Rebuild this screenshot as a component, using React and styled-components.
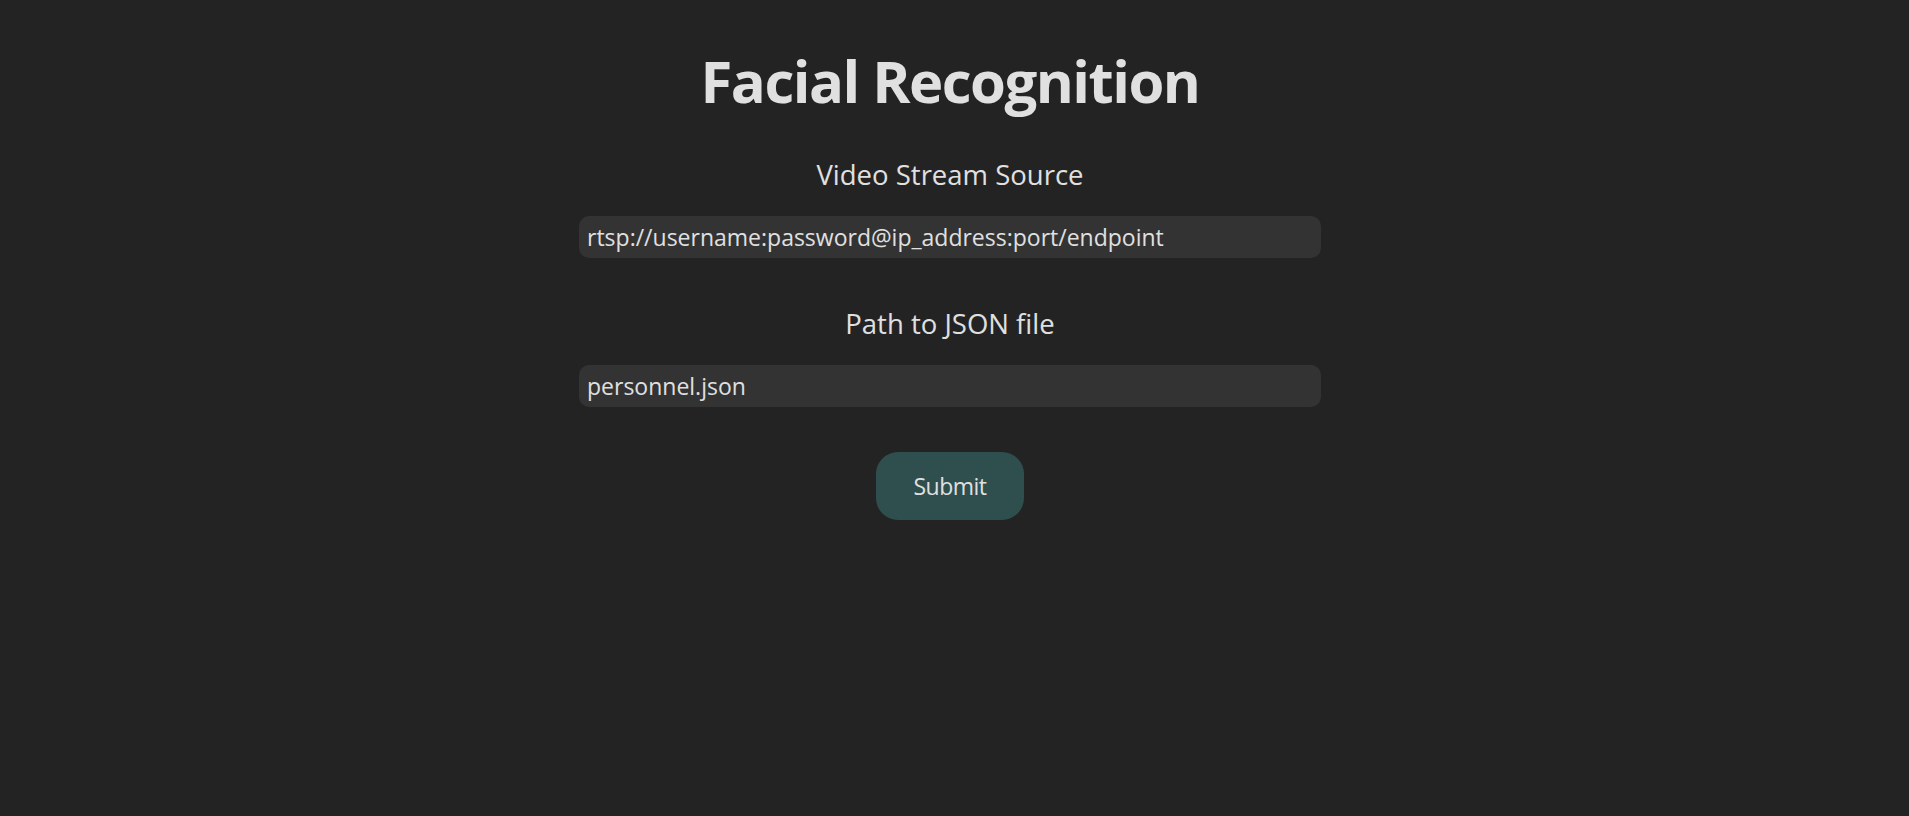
import React from 'react';
import styled, { createGlobalStyle } from 'styled-components';

const GlobalStyle = createGlobalStyle`
  html, body {
    margin: 0;
    padding: 0;
    background: #232323;
  }
  body {
    font-family: "Open Sans", "Noto Sans", sans-serif;
    color: #e0e0e0;
  }
`;

const Page = styled.div`
  display: flex;
  flex-direction: column;
  align-items: center;
  min-height: 816px;
  padding: 46px 9px 0 0;
  box-sizing: border-box;
`;

const Title = styled.h1`
  margin: 0;
  font-size: 58px;
  font-weight: 700;
  line-height: 1.2;
  letter-spacing: -1.5px;
  color: #e0e0e0;
`;

const Form = styled.form`
  display: flex;
  flex-direction: column;
  align-items: center;
  width: 742px;
  margin-top: 41px;
`;

const Field = styled.div`
  display: flex;
  flex-direction: column;
  align-items: center;
  width: 100%;
  margin-bottom: ${(p) => p.gap || 0}px;
`;

const Label = styled.label`
  font-size: 27.5px;
  line-height: 36px;
  color: #e0e0e0;
  margin-bottom: 23px;
`;

const Input = styled.input`
  width: 100%;
  height: 42px;
  box-sizing: border-box;
  border: none;
  outline: none;
  border-radius: 10px;
  background: #333333;
  color: #e0e0e0;
  font-family: "Open Sans", "Noto Sans", sans-serif;
  font-size: 23px;
  padding: 0 8px;
`;

const Button = styled.button`
  width: 148px;
  height: 68px;
  border: none;
  border-radius: 22px;
  background: #2f4f4f;
  color: #e0e0e0;
  font-family: "Open Sans", "Noto Sans", sans-serif;
  font-size: 23px;
  letter-spacing: -0.5px;
  cursor: pointer;
  margin-top: 45px;
`;

export default function App() {
  return (
    <>
      <GlobalStyle />
      <Page>
        <Title>Facial Recognition</Title>
        <Form onSubmit={(e) => e.preventDefault()}>
          <Field gap={48}>
            <Label htmlFor="stream">Video Stream Source</Label>
            <Input id="stream" defaultValue="rtsp://username:password@ip_address:port/endpoint" />
          </Field>
          <Field>
            <Label htmlFor="json">Path to JSON file</Label>
            <Input id="json" defaultValue="personnel.json" />
          </Field>
          <Button type="submit">Submit</Button>
        </Form>
      </Page>
    </>
  );
}
